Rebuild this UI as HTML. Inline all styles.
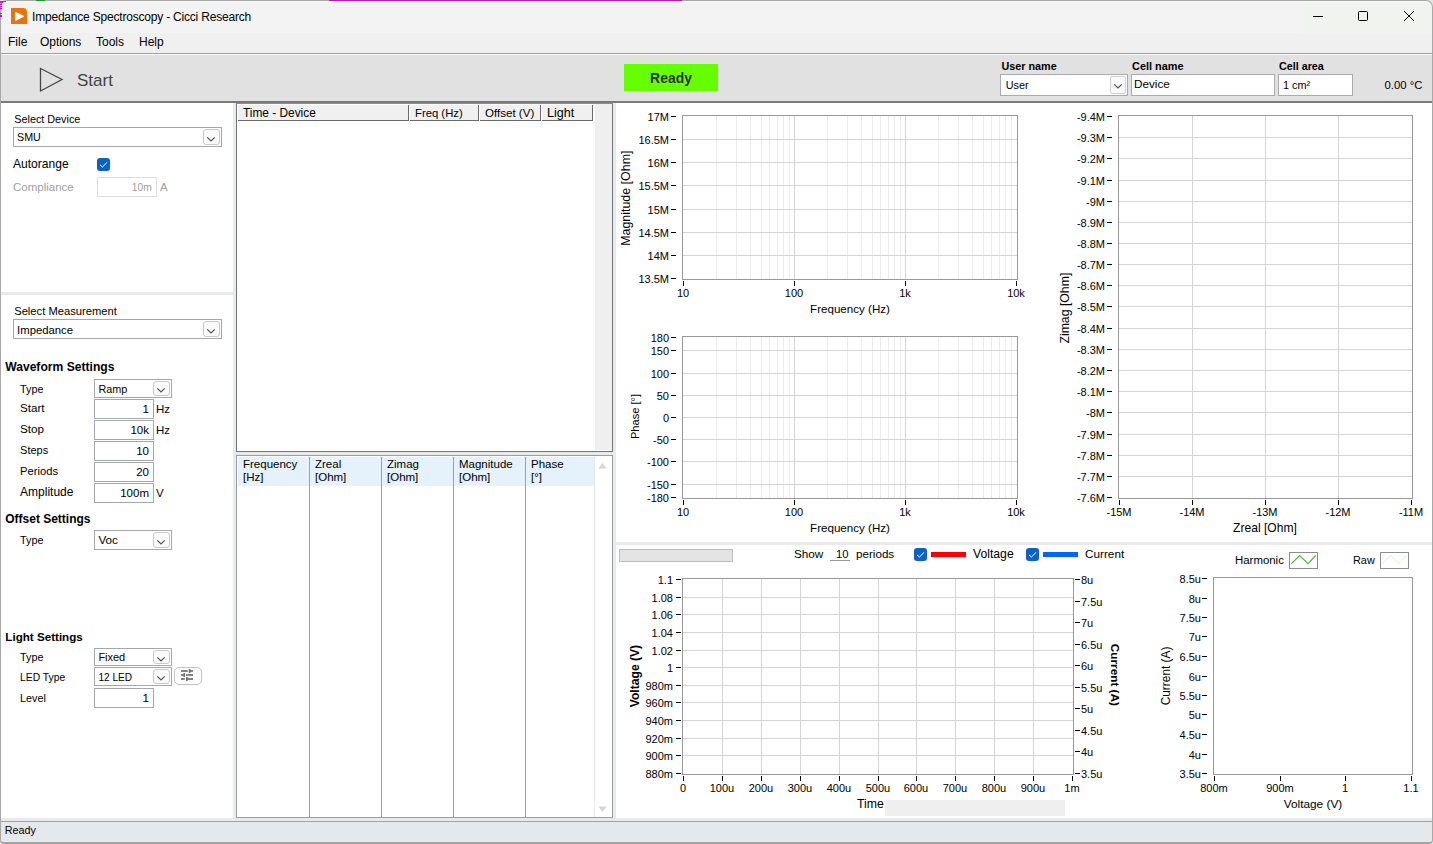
<!DOCTYPE html><html><head><meta charset="utf-8"><style>
html,body{margin:0;padding:0;width:1433px;height:844px;overflow:hidden;background:#fff;}
body{position:relative;font-family:"Liberation Sans", sans-serif;font-size:12px;color:#000;}
.t{position:absolute;white-space:nowrap;line-height:14px;}
.r{position:absolute;white-space:nowrap;line-height:14px;text-align:right;}
.c{position:absolute;white-space:nowrap;line-height:14px;text-align:center;}
</style></head><body>
<div style="position:absolute;left:0px;top:0px;width:1433px;height:33px;background:#f3f3f3;"></div>
<div style="position:absolute;left:1303px;top:0px;width:130px;height:33px;background:#f1f3ee;"></div>
<div style="position:absolute;left:329px;top:0px;width:353px;height:1px;background:#b41ab6;"></div>
<div style="position:absolute;left:0px;top:1px;width:1433px;height:1px;background:#f7faf7;"></div>
<div style="position:absolute;left:0px;top:33px;width:1433px;height:20px;background:#f0f0f0;"></div>
<div style="position:absolute;left:0px;top:53px;width:1433px;height:1px;background:#9f9f9f;"></div>
<div style="position:absolute;left:0px;top:54px;width:1433px;height:1px;background:#fcfcfc;"></div>
<div style="position:absolute;left:11px;top:8px;width:16px;height:16px;background:#e6740a;border-radius:0 4px 0 0;"></div>
<svg style="position:absolute;left:11px;top:8px" width="16" height="16"><path d="M4.6 4.6 L12.4 8.2 L4.6 12.2 Z" fill="#fff" stroke="#fff" stroke-width="1.2" stroke-linejoin="round"/></svg>
<div style="position:absolute;left:32px;top:11.00px;font-size:12px;line-height:12px;white-space:nowrap;letter-spacing:-0.2px;">Impedance Spectroscopy - Cicci Research</div>
<svg style="position:absolute;left:1300px;top:5px" width="130" height="24"><line x1="13" y1="11.5" x2="23" y2="11.5" stroke="#000" stroke-width="1"/><rect x="58.5" y="6.5" width="9" height="9" rx="1" fill="none" stroke="#000" stroke-width="1"/><line x1="104" y1="6" x2="114" y2="16" stroke="#000" stroke-width="1"/><line x1="114" y1="6" x2="104" y2="16" stroke="#000" stroke-width="1"/></svg>
<div class="t" style="left:8px;top:35px;font-size:12px;">File</div>
<div class="t" style="left:40px;top:35px;font-size:12px;">Options</div>
<div class="t" style="left:96px;top:35px;font-size:12px;">Tools</div>
<div class="t" style="left:139px;top:35px;font-size:12px;">Help</div>
<div style="position:absolute;left:0px;top:55px;width:1433px;height:46px;background:#e1e1e1;"></div>
<div style="position:absolute;left:0px;top:101px;width:1433px;height:2px;background:#7a7a7a;"></div>
<svg style="position:absolute;left:38px;top:65.5px" width="30" height="28"><path d="M2.5 2.5 L24 13.5 L2.5 25 Z" fill="none" stroke="#474747" stroke-width="1.3"/></svg>
<div class="t" style="left:77px;top:71px;font-size:17px;line-height:20px;color:#444;">Start</div>
<div style="position:absolute;left:624px;top:64px;width:94px;height:27px;background:#66ff00;"></div>
<div style="position:absolute;left:571px;width:200px;top:72.00px;font-size:13.93px;line-height:13.93px;white-space:nowrap;text-align:center;font-weight:bold;color:#33303a;">Ready</div>
<div style="position:absolute;left:1001.5px;top:61.00px;font-size:10.81px;line-height:10.81px;white-space:nowrap;font-weight:bold;">User name</div>
<div style="position:absolute;left:1132px;top:61.00px;font-size:10.92px;line-height:10.92px;white-space:nowrap;font-weight:bold;">Cell name</div>
<div style="position:absolute;left:1279px;top:61.00px;font-size:10.74px;line-height:10.74px;white-space:nowrap;font-weight:bold;">Cell area</div>
<div style="position:absolute;left:1000px;top:74px;width:128px;height:22px;background:#fff;border:1px solid #a9abae;box-sizing:border-box;"></div>
<div style="position:absolute;left:1110px;top:76px;width:16px;height:18px;background:#fafafa;border:1px solid #d0d0d0;box-sizing:border-box;border-radius:2px;"></div>
<svg style="position:absolute;left:1113px;top:82px" width="10" height="8"><path d="M1.3 2.3 L5 6 L8.7 2.3" fill="none" stroke="#505050" stroke-width="1.2"/></svg>
<div style="position:absolute;left:1005.7px;top:80.00px;font-size:10.8px;line-height:10.8px;white-space:nowrap;">User</div>
<div style="position:absolute;left:1131px;top:74px;width:144px;height:22px;background:#fff;border:1px solid #a9abae;box-sizing:border-box;"></div>
<div style="position:absolute;left:1134px;top:78.00px;font-size:11.71px;line-height:11.71px;white-space:nowrap;">Device</div>
<div style="position:absolute;left:1278px;top:74px;width:75px;height:22px;background:#fff;border:1px solid #a9abae;box-sizing:border-box;"></div>
<div style="position:absolute;left:1283px;top:80.00px;font-size:10.88px;line-height:10.88px;white-space:nowrap;">1 cm²</div>
<div style="position:absolute;left:1384.5px;top:80.00px;font-size:11.3px;line-height:11.3px;white-space:nowrap;">0.00 °C</div>
<div style="position:absolute;left:0px;top:103px;width:1433px;height:718px;background:#e9eaeb;"></div>
<div style="position:absolute;left:1px;top:103px;width:232px;height:189px;background:#fff;"></div>
<div style="position:absolute;left:1px;top:295px;width:232px;height:523px;background:#fff;"></div>
<div style="position:absolute;left:236px;top:103px;width:377px;height:349px;background:#fff;border:1px solid #6f7680;border-top:none;box-sizing:border-box;"></div>
<div style="position:absolute;left:236px;top:103px;width:377px;height:1px;background:#8a8d92;"></div>
<div style="position:absolute;left:238px;top:105px;width:171px;height:16px;background:#f0f0f0;border-right:1px solid #6a6a6a;border-bottom:1px solid #6a6a6a;box-sizing:border-box;"></div>
<div style="position:absolute;left:243px;top:108.00px;font-size:11.89px;line-height:11.89px;white-space:nowrap;">Time - Device</div>
<div style="position:absolute;left:410px;top:105px;width:69px;height:16px;background:#f0f0f0;border-right:1px solid #6a6a6a;border-bottom:1px solid #6a6a6a;box-sizing:border-box;"></div>
<div style="position:absolute;left:415px;top:108.00px;font-size:11.3px;line-height:11.3px;white-space:nowrap;">Freq (Hz)</div>
<div style="position:absolute;left:480px;top:105px;width:61px;height:16px;background:#f0f0f0;border-right:1px solid #6a6a6a;border-bottom:1px solid #6a6a6a;box-sizing:border-box;"></div>
<div style="position:absolute;left:485px;top:108.00px;font-size:11.57px;line-height:11.57px;white-space:nowrap;">Offset (V)</div>
<div style="position:absolute;left:542px;top:105px;width:51px;height:16px;background:#f0f0f0;border-right:1px solid #6a6a6a;border-bottom:1px solid #6a6a6a;box-sizing:border-box;"></div>
<div style="position:absolute;left:547px;top:107.00px;font-size:12.5px;line-height:12.5px;white-space:nowrap;">Light</div>
<div style="position:absolute;left:595px;top:104px;width:17px;height:346px;background:#efefef;"></div>
<div style="position:absolute;left:236px;top:455px;width:377px;height:363px;background:#fff;border:1px solid #9a9ea4;box-sizing:border-box;"></div>
<div style="position:absolute;left:238px;top:457px;width:357px;height:29px;background:#e5f1fb;"></div>
<div style="position:absolute;left:309px;top:457px;width:1px;height:360px;background:#a0a0a0;"></div>
<div style="position:absolute;left:381px;top:457px;width:1px;height:360px;background:#a0a0a0;"></div>
<div style="position:absolute;left:453px;top:457px;width:1px;height:360px;background:#a0a0a0;"></div>
<div style="position:absolute;left:525px;top:457px;width:1px;height:360px;background:#a0a0a0;"></div>
<div style="position:absolute;left:594px;top:457px;width:1px;height:360px;background:#e6e6e6;"></div>
<div style="position:absolute;left:243px;top:459.00px;font-size:11.5px;line-height:11.5px;white-space:nowrap;">Frequency</div>
<div style="position:absolute;left:243px;top:472.00px;font-size:11.5px;line-height:11.5px;white-space:nowrap;">[Hz]</div>
<div style="position:absolute;left:315px;top:459.00px;font-size:11.5px;line-height:11.5px;white-space:nowrap;">Zreal</div>
<div style="position:absolute;left:315px;top:472.00px;font-size:11.5px;line-height:11.5px;white-space:nowrap;">[Ohm]</div>
<div style="position:absolute;left:387px;top:459.00px;font-size:11.5px;line-height:11.5px;white-space:nowrap;">Zimag</div>
<div style="position:absolute;left:387px;top:472.00px;font-size:11.5px;line-height:11.5px;white-space:nowrap;">[Ohm]</div>
<div style="position:absolute;left:459px;top:459.00px;font-size:11.5px;line-height:11.5px;white-space:nowrap;">Magnitude</div>
<div style="position:absolute;left:459px;top:472.00px;font-size:11.5px;line-height:11.5px;white-space:nowrap;">[Ohm]</div>
<div style="position:absolute;left:531px;top:459.00px;font-size:11.5px;line-height:11.5px;white-space:nowrap;">Phase</div>
<div style="position:absolute;left:531px;top:472.00px;font-size:11.5px;line-height:11.5px;white-space:nowrap;">[°]</div>
<svg style="position:absolute;left:598px;top:462px" width="9" height="7"><path d="M0.5 6.5 L4.5 1 L8.5 6.5 Z" fill="#d6d6d6"/></svg>
<svg style="position:absolute;left:598px;top:806px" width="9" height="7"><path d="M0.5 0.5 L4.5 6 L8.5 0.5 Z" fill="#d6d6d6"/></svg>
<div style="position:absolute;left:616px;top:103px;width:816px;height:439px;background:#fff;"></div>
<div style="position:absolute;left:616px;top:545px;width:816px;height:273px;background:#fff;"></div>
<div style="position:absolute;left:1px;top:821px;width:1431px;height:1px;background:#a3a3a3;"></div>
<div style="position:absolute;left:1px;top:822px;width:1431px;height:20px;background:#e6e9ec;"></div>
<div style="position:absolute;left:4.7px;top:825.00px;font-size:10.76px;line-height:10.76px;white-space:nowrap;">Ready</div>
<div style="position:absolute;left:14.3px;top:114.00px;font-size:10.81px;line-height:10.81px;white-space:nowrap;">Select Device</div>
<div style="position:absolute;left:13px;top:127px;width:209px;height:20px;background:#fff;border:1px solid #a4a7ac;box-sizing:border-box;"></div>
<div style="position:absolute;left:203px;top:129px;width:17px;height:16px;box-sizing:border-box;border:1px solid #c9c9c9;border-radius:3px;background:#fafafa;"></div>
<svg style="position:absolute;left:206px;top:135px" width="10" height="8"><path d="M1.3 2.3 L5 6 L8.7 2.3" fill="none" stroke="#505050" stroke-width="1.2"/></svg>
<div style="position:absolute;left:17px;top:132.00px;font-size:10.71px;line-height:10.71px;white-space:nowrap;">SMU</div>
<div style="position:absolute;left:13px;top:158.00px;font-size:12.05px;line-height:12.05px;white-space:nowrap;">Autorange</div>
<div style="position:absolute;left:97px;top:158px;width:13px;height:13px;background:#0a62c2;border-radius:3px;"></div>
<svg style="position:absolute;left:97px;top:158px" width="13" height="13"><path d="M3 6.8 L5.4 9 L10.2 4.3" fill="none" stroke="#fff" stroke-width="1"/></svg>
<div style="position:absolute;left:13px;top:182.00px;font-size:11.5px;line-height:11.5px;white-space:nowrap;color:#a0a0a0;">Compliance</div>
<div style="position:absolute;left:97px;top:177px;width:60px;height:20px;background:#fff;border:1px solid #dcdde0;box-sizing:border-box;"></div>
<div style="position:absolute;left:131.8px;top:183.00px;font-size:10.28px;line-height:10.28px;white-space:nowrap;color:#a0a0a0;">10m</div>
<div style="position:absolute;left:160px;top:182.00px;font-size:11.5px;line-height:11.5px;white-space:nowrap;color:#a0a0a0;">A</div>
<div style="position:absolute;left:14.2px;top:306.00px;font-size:11.2px;line-height:11.2px;white-space:nowrap;">Select Measurement</div>
<div style="position:absolute;left:13px;top:319px;width:209px;height:20px;background:#fff;border:1px solid #a4a7ac;box-sizing:border-box;"></div>
<div style="position:absolute;left:203px;top:321px;width:17px;height:16px;box-sizing:border-box;border:1px solid #c9c9c9;border-radius:3px;background:#fafafa;"></div>
<svg style="position:absolute;left:206px;top:327px" width="10" height="8"><path d="M1.3 2.3 L5 6 L8.7 2.3" fill="none" stroke="#505050" stroke-width="1.2"/></svg>
<div style="position:absolute;left:17.1px;top:325.00px;font-size:11.32px;line-height:11.32px;white-space:nowrap;">Impedance</div>
<div style="position:absolute;left:5.2px;top:361.00px;font-size:12.12px;line-height:12.12px;white-space:nowrap;font-weight:bold;">Waveform Settings</div>
<div style="position:absolute;left:20.1px;top:384.00px;font-size:10.79px;line-height:10.79px;white-space:nowrap;">Type</div>
<div style="position:absolute;left:94px;top:379px;width:78px;height:19px;background:#fff;border:1px solid #a4a7ac;box-sizing:border-box;"></div>
<div style="position:absolute;left:153px;top:381px;width:17px;height:15px;box-sizing:border-box;border:1px solid #c9c9c9;border-radius:3px;background:#fafafa;"></div>
<svg style="position:absolute;left:156px;top:386px" width="10" height="8"><path d="M1.3 2.3 L5 6 L8.7 2.3" fill="none" stroke="#505050" stroke-width="1.2"/></svg>
<div style="position:absolute;left:98.4px;top:384.00px;font-size:10.8px;line-height:10.8px;white-space:nowrap;">Ramp</div>
<div style="position:absolute;left:20.1px;top:402.00px;font-size:11.6px;line-height:11.6px;white-space:nowrap;">Start</div>
<div style="position:absolute;left:94px;top:399px;width:60px;height:20px;background:#fff;border:1px solid #a4a7ac;box-sizing:border-box;"></div>
<div style="position:absolute;right:1284px;top:404.00px;font-size:11.5px;line-height:11.5px;white-space:nowrap;text-align:right;color:#000;">1</div>
<div style="position:absolute;left:156px;top:404.00px;font-size:11.5px;line-height:11.5px;white-space:nowrap;">Hz</div>
<div style="position:absolute;left:20.1px;top:423.00px;font-size:11.67px;line-height:11.67px;white-space:nowrap;">Stop</div>
<div style="position:absolute;left:94px;top:420px;width:60px;height:20px;background:#fff;border:1px solid #a4a7ac;box-sizing:border-box;"></div>
<div style="position:absolute;right:1284px;top:425.00px;font-size:11.5px;line-height:11.5px;white-space:nowrap;text-align:right;color:#000;">10k</div>
<div style="position:absolute;left:156px;top:425.00px;font-size:11.5px;line-height:11.5px;white-space:nowrap;">Hz</div>
<div style="position:absolute;left:20.1px;top:445.00px;font-size:10.99px;line-height:10.99px;white-space:nowrap;">Steps</div>
<div style="position:absolute;left:94px;top:441px;width:60px;height:20px;background:#fff;border:1px solid #a4a7ac;box-sizing:border-box;"></div>
<div style="position:absolute;right:1284px;top:446.00px;font-size:11.5px;line-height:11.5px;white-space:nowrap;text-align:right;color:#000;">10</div>
<div style="position:absolute;left:20.1px;top:466.00px;font-size:11.21px;line-height:11.21px;white-space:nowrap;">Periods</div>
<div style="position:absolute;left:94px;top:462px;width:60px;height:20px;background:#fff;border:1px solid #a4a7ac;box-sizing:border-box;"></div>
<div style="position:absolute;right:1284px;top:467.00px;font-size:11.5px;line-height:11.5px;white-space:nowrap;text-align:right;color:#000;">20</div>
<div style="position:absolute;left:20.1px;top:486.00px;font-size:11.99px;line-height:11.99px;white-space:nowrap;">Amplitude</div>
<div style="position:absolute;left:94px;top:483px;width:60px;height:20px;background:#fff;border:1px solid #a4a7ac;box-sizing:border-box;"></div>
<div style="position:absolute;right:1284px;top:488.00px;font-size:11.5px;line-height:11.5px;white-space:nowrap;text-align:right;color:#000;">100m</div>
<div style="position:absolute;left:156px;top:488.00px;font-size:11.5px;line-height:11.5px;white-space:nowrap;">V</div>
<div style="position:absolute;left:5.3px;top:513.00px;font-size:11.98px;line-height:11.98px;white-space:nowrap;font-weight:bold;">Offset Settings</div>
<div style="position:absolute;left:20.1px;top:535.00px;font-size:10.79px;line-height:10.79px;white-space:nowrap;">Type</div>
<div style="position:absolute;left:94px;top:530px;width:78px;height:20px;background:#fff;border:1px solid #a4a7ac;box-sizing:border-box;"></div>
<div style="position:absolute;left:153px;top:532px;width:17px;height:16px;box-sizing:border-box;border:1px solid #c9c9c9;border-radius:3px;background:#fafafa;"></div>
<svg style="position:absolute;left:156px;top:538px" width="10" height="8"><path d="M1.3 2.3 L5 6 L8.7 2.3" fill="none" stroke="#505050" stroke-width="1.2"/></svg>
<div style="position:absolute;left:98.4px;top:534.00px;font-size:11.69px;line-height:11.69px;white-space:nowrap;">Voc</div>
<div style="position:absolute;left:5.3px;top:631.00px;font-size:11.63px;line-height:11.63px;white-space:nowrap;font-weight:bold;">Light Settings</div>
<div style="position:absolute;left:20.1px;top:652.00px;font-size:10.79px;line-height:10.79px;white-space:nowrap;">Type</div>
<div style="position:absolute;left:94px;top:648px;width:78px;height:18px;background:#fff;border:1px solid #a4a7ac;box-sizing:border-box;"></div>
<div style="position:absolute;left:153px;top:650px;width:17px;height:14px;box-sizing:border-box;border:1px solid #c9c9c9;border-radius:3px;background:#fafafa;"></div>
<svg style="position:absolute;left:156px;top:655px" width="10" height="8"><path d="M1.3 2.3 L5 6 L8.7 2.3" fill="none" stroke="#505050" stroke-width="1.2"/></svg>
<div style="position:absolute;left:98.4px;top:652.00px;font-size:10.96px;line-height:10.96px;white-space:nowrap;">Fixed</div>
<div style="position:absolute;left:20.1px;top:673.00px;font-size:10.34px;line-height:10.34px;white-space:nowrap;">LED Type</div>
<div style="position:absolute;left:94px;top:667px;width:78px;height:19px;background:#fff;border:1px solid #a4a7ac;box-sizing:border-box;"></div>
<div style="position:absolute;left:153px;top:669px;width:17px;height:15px;box-sizing:border-box;border:1px solid #c9c9c9;border-radius:3px;background:#fafafa;"></div>
<svg style="position:absolute;left:156px;top:674px" width="10" height="8"><path d="M1.3 2.3 L5 6 L8.7 2.3" fill="none" stroke="#505050" stroke-width="1.2"/></svg>
<div style="position:absolute;left:98.4px;top:673.00px;font-size:10.1px;line-height:10.1px;white-space:nowrap;">12 LED</div>
<div style="position:absolute;left:174px;top:667px;width:28px;height:18px;box-sizing:border-box;border:1px solid #c4c4c4;border-radius:5px;background:#fcfcfc;"></div>
<svg style="position:absolute;left:170px;top:662px" width="40" height="28"><g stroke="#6e6e6e" stroke-width="1.7"><line x1="181" y1="9" x2="187.8" y2="9" transform="translate(-170,0)"/><line x1="189" y1="9" x2="193" y2="9" transform="translate(-170,0)"/><line x1="181" y1="13" x2="184.5" y2="13" transform="translate(-170,0)"/><line x1="186" y1="13" x2="193" y2="13" transform="translate(-170,0)"/><line x1="181" y1="17" x2="184.8" y2="17" transform="translate(-170,0)"/><line x1="186.5" y1="17" x2="193" y2="17" transform="translate(-170,0)"/></g><g stroke="#6e6e6e" stroke-width="1.6"><line x1="19.6" y1="7" x2="19.6" y2="11"/><line x1="14.3" y1="11" x2="14.3" y2="15"/><line x1="16.8" y1="15" x2="16.8" y2="19"/></g></svg>
<div style="position:absolute;left:20.1px;top:693.00px;font-size:10.75px;line-height:10.75px;white-space:nowrap;">Level</div>
<div style="position:absolute;left:94px;top:688px;width:60px;height:20px;background:#fff;border:1px solid #a4a7ac;box-sizing:border-box;"></div>
<div style="position:absolute;right:1284px;top:693.00px;font-size:11.5px;line-height:11.5px;white-space:nowrap;text-align:right;color:#000;">1</div>
<div style="position:absolute;right:764px;top:112.00px;font-size:11px;line-height:11px;white-space:nowrap;text-align:right;">17M</div>
<div style="position:absolute;right:764px;top:135.00px;font-size:11px;line-height:11px;white-space:nowrap;text-align:right;">16.5M</div>
<div style="position:absolute;right:764px;top:158.00px;font-size:11px;line-height:11px;white-space:nowrap;text-align:right;">16M</div>
<div style="position:absolute;right:764px;top:181.00px;font-size:11px;line-height:11px;white-space:nowrap;text-align:right;">15.5M</div>
<div style="position:absolute;right:764px;top:205.00px;font-size:11px;line-height:11px;white-space:nowrap;text-align:right;">15M</div>
<div style="position:absolute;right:764px;top:228.00px;font-size:11px;line-height:11px;white-space:nowrap;text-align:right;">14.5M</div>
<div style="position:absolute;right:764px;top:251.00px;font-size:11px;line-height:11px;white-space:nowrap;text-align:right;">14M</div>
<div style="position:absolute;right:764px;top:274.00px;font-size:11px;line-height:11px;white-space:nowrap;text-align:right;">13.5M</div>
<div style="position:absolute;left:583px;width:200px;top:288.00px;font-size:11px;line-height:11px;white-space:nowrap;text-align:center;">10</div>
<div style="position:absolute;left:694px;width:200px;top:288.00px;font-size:11px;line-height:11px;white-space:nowrap;text-align:center;">100</div>
<div style="position:absolute;left:805px;width:200px;top:288.00px;font-size:11px;line-height:11px;white-space:nowrap;text-align:center;">1k</div>
<div style="position:absolute;left:916px;width:200px;top:288.00px;font-size:11px;line-height:11px;white-space:nowrap;text-align:center;">10k</div>
<div style="position:absolute;left:750px;width:200px;top:304.00px;font-size:11.58px;line-height:11.58px;white-space:nowrap;text-align:center;">Frequency (Hz)</div>
<div style="position:absolute;left:475.95px;top:192.09px;width:300px;height:12.43px;line-height:12.43px;font-size:12.43px;text-align:center;white-space:nowrap;transform:rotate(-90deg);">Magnitude [Ohm]</div>
<div style="position:absolute;right:764px;top:333.00px;font-size:11px;line-height:11px;white-space:nowrap;text-align:right;">180</div>
<div style="position:absolute;right:764px;top:346.00px;font-size:11px;line-height:11px;white-space:nowrap;text-align:right;">150</div>
<div style="position:absolute;right:764px;top:369.00px;font-size:11px;line-height:11px;white-space:nowrap;text-align:right;">100</div>
<div style="position:absolute;right:764px;top:391.00px;font-size:11px;line-height:11px;white-space:nowrap;text-align:right;">50</div>
<div style="position:absolute;right:764px;top:413.00px;font-size:11px;line-height:11px;white-space:nowrap;text-align:right;">0</div>
<div style="position:absolute;right:764px;top:435.00px;font-size:11px;line-height:11px;white-space:nowrap;text-align:right;">-50</div>
<div style="position:absolute;right:764px;top:457.00px;font-size:11px;line-height:11px;white-space:nowrap;text-align:right;">-100</div>
<div style="position:absolute;right:764px;top:480.00px;font-size:11px;line-height:11px;white-space:nowrap;text-align:right;">-150</div>
<div style="position:absolute;right:764px;top:493.00px;font-size:11px;line-height:11px;white-space:nowrap;text-align:right;">-180</div>
<div style="position:absolute;left:583px;width:200px;top:507.00px;font-size:11px;line-height:11px;white-space:nowrap;text-align:center;">10</div>
<div style="position:absolute;left:694px;width:200px;top:507.00px;font-size:11px;line-height:11px;white-space:nowrap;text-align:center;">100</div>
<div style="position:absolute;left:805px;width:200px;top:507.00px;font-size:11px;line-height:11px;white-space:nowrap;text-align:center;">1k</div>
<div style="position:absolute;left:916px;width:200px;top:507.00px;font-size:11px;line-height:11px;white-space:nowrap;text-align:center;">10k</div>
<div style="position:absolute;left:750px;width:200px;top:523.00px;font-size:11.58px;line-height:11.58px;white-space:nowrap;text-align:center;">Frequency (Hz)</div>
<div style="position:absolute;left:485.50px;top:411.41px;width:300px;height:11.08px;line-height:11.08px;font-size:11.08px;text-align:center;white-space:nowrap;transform:rotate(-90deg);">Phase [°]</div>
<div style="position:absolute;right:328px;top:112.00px;font-size:11px;line-height:11px;white-space:nowrap;text-align:right;">-9.4M</div>
<div style="position:absolute;right:328px;top:133.00px;font-size:11px;line-height:11px;white-space:nowrap;text-align:right;">-9.3M</div>
<div style="position:absolute;right:328px;top:154.00px;font-size:11px;line-height:11px;white-space:nowrap;text-align:right;">-9.2M</div>
<div style="position:absolute;right:328px;top:176.00px;font-size:11px;line-height:11px;white-space:nowrap;text-align:right;">-9.1M</div>
<div style="position:absolute;right:328px;top:197.00px;font-size:11px;line-height:11px;white-space:nowrap;text-align:right;">-9M</div>
<div style="position:absolute;right:328px;top:218.00px;font-size:11px;line-height:11px;white-space:nowrap;text-align:right;">-8.9M</div>
<div style="position:absolute;right:328px;top:239.00px;font-size:11px;line-height:11px;white-space:nowrap;text-align:right;">-8.8M</div>
<div style="position:absolute;right:328px;top:260.00px;font-size:11px;line-height:11px;white-space:nowrap;text-align:right;">-8.7M</div>
<div style="position:absolute;right:328px;top:281.00px;font-size:11px;line-height:11px;white-space:nowrap;text-align:right;">-8.6M</div>
<div style="position:absolute;right:328px;top:302.00px;font-size:11px;line-height:11px;white-space:nowrap;text-align:right;">-8.5M</div>
<div style="position:absolute;right:328px;top:324.00px;font-size:11px;line-height:11px;white-space:nowrap;text-align:right;">-8.4M</div>
<div style="position:absolute;right:328px;top:345.00px;font-size:11px;line-height:11px;white-space:nowrap;text-align:right;">-8.3M</div>
<div style="position:absolute;right:328px;top:366.00px;font-size:11px;line-height:11px;white-space:nowrap;text-align:right;">-8.2M</div>
<div style="position:absolute;right:328px;top:387.00px;font-size:11px;line-height:11px;white-space:nowrap;text-align:right;">-8.1M</div>
<div style="position:absolute;right:328px;top:408.00px;font-size:11px;line-height:11px;white-space:nowrap;text-align:right;">-8M</div>
<div style="position:absolute;right:328px;top:430.00px;font-size:11px;line-height:11px;white-space:nowrap;text-align:right;">-7.9M</div>
<div style="position:absolute;right:328px;top:451.00px;font-size:11px;line-height:11px;white-space:nowrap;text-align:right;">-7.8M</div>
<div style="position:absolute;right:328px;top:472.00px;font-size:11px;line-height:11px;white-space:nowrap;text-align:right;">-7.7M</div>
<div style="position:absolute;right:328px;top:493.00px;font-size:11px;line-height:11px;white-space:nowrap;text-align:right;">-7.6M</div>
<div style="position:absolute;left:1019px;width:200px;top:507.00px;font-size:11px;line-height:11px;white-space:nowrap;text-align:center;">-15M</div>
<div style="position:absolute;left:1092px;width:200px;top:507.00px;font-size:11px;line-height:11px;white-space:nowrap;text-align:center;">-14M</div>
<div style="position:absolute;left:1165px;width:200px;top:507.00px;font-size:11px;line-height:11px;white-space:nowrap;text-align:center;">-13M</div>
<div style="position:absolute;left:1238px;width:200px;top:507.00px;font-size:11px;line-height:11px;white-space:nowrap;text-align:center;">-12M</div>
<div style="position:absolute;left:1311px;width:200px;top:507.00px;font-size:11px;line-height:11px;white-space:nowrap;text-align:center;">-11M</div>
<div style="position:absolute;left:1165px;width:200px;top:522.00px;font-size:12.09px;line-height:12.09px;white-space:nowrap;text-align:center;">Zreal [Ohm]</div>
<div style="position:absolute;left:914.50px;top:302.36px;width:300px;height:12.28px;line-height:12.28px;font-size:12.28px;text-align:center;white-space:nowrap;transform:rotate(-90deg);">Zimag [Ohm]</div>
<div style="position:absolute;right:760px;top:575.00px;font-size:11px;line-height:11px;white-space:nowrap;text-align:right;">1.1</div>
<div style="position:absolute;right:760px;top:593.00px;font-size:11px;line-height:11px;white-space:nowrap;text-align:right;">1.08</div>
<div style="position:absolute;right:760px;top:610.00px;font-size:11px;line-height:11px;white-space:nowrap;text-align:right;">1.06</div>
<div style="position:absolute;right:760px;top:628.00px;font-size:11px;line-height:11px;white-space:nowrap;text-align:right;">1.04</div>
<div style="position:absolute;right:760px;top:646.00px;font-size:11px;line-height:11px;white-space:nowrap;text-align:right;">1.02</div>
<div style="position:absolute;right:760px;top:663.00px;font-size:11px;line-height:11px;white-space:nowrap;text-align:right;">1</div>
<div style="position:absolute;right:760px;top:681.00px;font-size:11px;line-height:11px;white-space:nowrap;text-align:right;">980m</div>
<div style="position:absolute;right:760px;top:698.00px;font-size:11px;line-height:11px;white-space:nowrap;text-align:right;">960m</div>
<div style="position:absolute;right:760px;top:716.00px;font-size:11px;line-height:11px;white-space:nowrap;text-align:right;">940m</div>
<div style="position:absolute;right:760px;top:734.00px;font-size:11px;line-height:11px;white-space:nowrap;text-align:right;">920m</div>
<div style="position:absolute;right:760px;top:751.00px;font-size:11px;line-height:11px;white-space:nowrap;text-align:right;">900m</div>
<div style="position:absolute;right:760px;top:769.00px;font-size:11px;line-height:11px;white-space:nowrap;text-align:right;">880m</div>
<div style="position:absolute;left:1081px;top:575.00px;font-size:11px;line-height:11px;white-space:nowrap;">8u</div>
<div style="position:absolute;left:1081px;top:597.00px;font-size:11px;line-height:11px;white-space:nowrap;">7.5u</div>
<div style="position:absolute;left:1081px;top:618.00px;font-size:11px;line-height:11px;white-space:nowrap;">7u</div>
<div style="position:absolute;left:1081px;top:640.00px;font-size:11px;line-height:11px;white-space:nowrap;">6.5u</div>
<div style="position:absolute;left:1081px;top:661.00px;font-size:11px;line-height:11px;white-space:nowrap;">6u</div>
<div style="position:absolute;left:1081px;top:683.00px;font-size:11px;line-height:11px;white-space:nowrap;">5.5u</div>
<div style="position:absolute;left:1081px;top:704.00px;font-size:11px;line-height:11px;white-space:nowrap;">5u</div>
<div style="position:absolute;left:1081px;top:726.00px;font-size:11px;line-height:11px;white-space:nowrap;">4.5u</div>
<div style="position:absolute;left:1081px;top:747.00px;font-size:11px;line-height:11px;white-space:nowrap;">4u</div>
<div style="position:absolute;left:1081px;top:769.00px;font-size:11px;line-height:11px;white-space:nowrap;">3.5u</div>
<div style="position:absolute;left:583px;width:200px;top:783.00px;font-size:11px;line-height:11px;white-space:nowrap;text-align:center;">0</div>
<div style="position:absolute;left:622px;width:200px;top:783.00px;font-size:11px;line-height:11px;white-space:nowrap;text-align:center;">100u</div>
<div style="position:absolute;left:661px;width:200px;top:783.00px;font-size:11px;line-height:11px;white-space:nowrap;text-align:center;">200u</div>
<div style="position:absolute;left:700px;width:200px;top:783.00px;font-size:11px;line-height:11px;white-space:nowrap;text-align:center;">300u</div>
<div style="position:absolute;left:739px;width:200px;top:783.00px;font-size:11px;line-height:11px;white-space:nowrap;text-align:center;">400u</div>
<div style="position:absolute;left:778px;width:200px;top:783.00px;font-size:11px;line-height:11px;white-space:nowrap;text-align:center;">500u</div>
<div style="position:absolute;left:816px;width:200px;top:783.00px;font-size:11px;line-height:11px;white-space:nowrap;text-align:center;">600u</div>
<div style="position:absolute;left:855px;width:200px;top:783.00px;font-size:11px;line-height:11px;white-space:nowrap;text-align:center;">700u</div>
<div style="position:absolute;left:894px;width:200px;top:783.00px;font-size:11px;line-height:11px;white-space:nowrap;text-align:center;">800u</div>
<div style="position:absolute;left:933px;width:200px;top:783.00px;font-size:11px;line-height:11px;white-space:nowrap;text-align:center;">900u</div>
<div style="position:absolute;left:972px;width:200px;top:783.00px;font-size:11px;line-height:11px;white-space:nowrap;text-align:center;">1m</div>
<div style="position:absolute;left:857px;top:798.00px;font-size:12.27px;line-height:12.27px;white-space:nowrap;">Time</div>
<div style="position:absolute;left:885px;top:800px;width:180px;height:16px;background:#efefef;"></div>
<div style="position:absolute;left:484.90px;top:670.34px;width:300px;height:12.12px;line-height:12.12px;font-size:12.12px;text-align:center;white-space:nowrap;transform:rotate(-90deg);font-weight:bold;">Voltage (V)</div>
<div style="position:absolute;left:964.50px;top:669.01px;width:300px;height:11.77px;line-height:11.77px;font-size:11.77px;text-align:center;white-space:nowrap;transform:rotate(90deg);font-weight:bold;">Current (A)</div>
<div style="position:absolute;left:619px;top:549px;width:114px;height:13px;background:#e4e4e4;border:1px solid #bdbdbd;box-sizing:border-box;"></div>
<div style="position:absolute;left:794px;top:548.00px;font-size:11.71px;line-height:11.71px;white-space:nowrap;">Show</div>
<div style="position:absolute;left:836px;top:549.00px;font-size:11.24px;line-height:11.24px;white-space:nowrap;">10</div>
<div style="position:absolute;left:856px;top:548.00px;font-size:11.65px;line-height:11.65px;white-space:nowrap;">periods</div>
<div style="position:absolute;left:914px;top:548px;width:13px;height:13px;background:#0a62c2;border-radius:3px;"></div>
<svg style="position:absolute;left:914px;top:548px" width="13" height="13"><path d="M3 6.8 L5.4 9 L10.2 4.3" fill="none" stroke="#fff" stroke-width="1"/></svg>
<div style="position:absolute;left:931px;top:552px;width:35px;height:5px;background:#ff0000;"></div>
<div style="position:absolute;left:973px;top:548.00px;font-size:12.2px;line-height:12.2px;white-space:nowrap;">Voltage</div>
<div style="position:absolute;left:1026px;top:548px;width:13px;height:13px;background:#0a62c2;border-radius:3px;"></div>
<svg style="position:absolute;left:1026px;top:548px" width="13" height="13"><path d="M3 6.8 L5.4 9 L10.2 4.3" fill="none" stroke="#fff" stroke-width="1"/></svg>
<div style="position:absolute;left:1043px;top:552px;width:35px;height:5px;background:#0064ff;"></div>
<div style="position:absolute;left:1085px;top:548.00px;font-size:11.76px;line-height:11.76px;white-space:nowrap;">Current</div>
<div style="position:absolute;right:232px;top:574.00px;font-size:11px;line-height:11px;white-space:nowrap;text-align:right;">8.5u</div>
<div style="position:absolute;right:232px;top:594.00px;font-size:11px;line-height:11px;white-space:nowrap;text-align:right;">8u</div>
<div style="position:absolute;right:232px;top:613.00px;font-size:11px;line-height:11px;white-space:nowrap;text-align:right;">7.5u</div>
<div style="position:absolute;right:232px;top:632.00px;font-size:11px;line-height:11px;white-space:nowrap;text-align:right;">7u</div>
<div style="position:absolute;right:232px;top:652.00px;font-size:11px;line-height:11px;white-space:nowrap;text-align:right;">6.5u</div>
<div style="position:absolute;right:232px;top:672.00px;font-size:11px;line-height:11px;white-space:nowrap;text-align:right;">6u</div>
<div style="position:absolute;right:232px;top:691.00px;font-size:11px;line-height:11px;white-space:nowrap;text-align:right;">5.5u</div>
<div style="position:absolute;right:232px;top:710.00px;font-size:11px;line-height:11px;white-space:nowrap;text-align:right;">5u</div>
<div style="position:absolute;right:232px;top:730.00px;font-size:11px;line-height:11px;white-space:nowrap;text-align:right;">4.5u</div>
<div style="position:absolute;right:232px;top:750.00px;font-size:11px;line-height:11px;white-space:nowrap;text-align:right;">4u</div>
<div style="position:absolute;right:232px;top:769.00px;font-size:11px;line-height:11px;white-space:nowrap;text-align:right;">3.5u</div>
<div style="position:absolute;left:1114px;width:200px;top:783.00px;font-size:11px;line-height:11px;white-space:nowrap;text-align:center;">800m</div>
<div style="position:absolute;left:1180px;width:200px;top:783.00px;font-size:11px;line-height:11px;white-space:nowrap;text-align:center;">900m</div>
<div style="position:absolute;left:1245px;width:200px;top:783.00px;font-size:11px;line-height:11px;white-space:nowrap;text-align:center;">1</div>
<div style="position:absolute;left:1311px;width:200px;top:783.00px;font-size:11px;line-height:11px;white-space:nowrap;text-align:center;">1.1</div>
<div style="position:absolute;left:1213px;width:200px;top:799.00px;font-size:11.84px;line-height:11.84px;white-space:nowrap;text-align:center;">Voltage (V)</div>
<div style="position:absolute;left:1016.90px;top:670.40px;width:300px;height:11.9px;line-height:11.9px;font-size:11.9px;text-align:center;white-space:nowrap;transform:rotate(-90deg);">Current (A)</div>
<div style="position:absolute;left:1235px;top:555.00px;font-size:11.43px;line-height:11.43px;white-space:nowrap;">Harmonic</div>
<div style="position:absolute;left:1289px;top:552px;width:29px;height:17px;border:1px solid #8c8c8c;box-sizing:border-box;background:#fff;"></div>
<svg style="position:absolute;left:1289px;top:552px" width="29" height="17"><path d="M2.3 11.6 L10.7 3.5 L19 11.6 L26.7 3.5" fill="none" stroke="#4cb63c" stroke-width="1.2"/></svg>
<div style="position:absolute;left:1353px;top:555.00px;font-size:10.9px;line-height:10.9px;white-space:nowrap;">Raw</div>
<div style="position:absolute;left:1380px;top:552px;width:29px;height:17px;border:1px solid #8c8c8c;box-sizing:border-box;background:#fff;"></div>
<svg style="position:absolute;left:1380px;top:552px" width="29" height="17"><path d="M2.3 11.6 L10.7 3.5 L19 11.6 L26.7 3.5" fill="none" stroke="#e6f7e3" stroke-width="1.2"/></svg>
<svg style="position:absolute;left:0;top:0" width="1433" height="844" shape-rendering="crispEdges"><line x1="716.5" y1="116" x2="716.5" y2="279" stroke="#ececec" stroke-width="1"/><line x1="736.5" y1="116" x2="736.5" y2="279" stroke="#ececec" stroke-width="1"/><line x1="750.5" y1="116" x2="750.5" y2="279" stroke="#ececec" stroke-width="1"/><line x1="761.5" y1="116" x2="761.5" y2="279" stroke="#ececec" stroke-width="1"/><line x1="769.5" y1="116" x2="769.5" y2="279" stroke="#ececec" stroke-width="1"/><line x1="777.5" y1="116" x2="777.5" y2="279" stroke="#ececec" stroke-width="1"/><line x1="783.5" y1="116" x2="783.5" y2="279" stroke="#ececec" stroke-width="1"/><line x1="789.5" y1="116" x2="789.5" y2="279" stroke="#ececec" stroke-width="1"/><line x1="827.5" y1="116" x2="827.5" y2="279" stroke="#ececec" stroke-width="1"/><line x1="847.5" y1="116" x2="847.5" y2="279" stroke="#ececec" stroke-width="1"/><line x1="861.5" y1="116" x2="861.5" y2="279" stroke="#ececec" stroke-width="1"/><line x1="872.5" y1="116" x2="872.5" y2="279" stroke="#ececec" stroke-width="1"/><line x1="880.5" y1="116" x2="880.5" y2="279" stroke="#ececec" stroke-width="1"/><line x1="888.5" y1="116" x2="888.5" y2="279" stroke="#ececec" stroke-width="1"/><line x1="894.5" y1="116" x2="894.5" y2="279" stroke="#ececec" stroke-width="1"/><line x1="900.5" y1="116" x2="900.5" y2="279" stroke="#ececec" stroke-width="1"/><line x1="938.5" y1="116" x2="938.5" y2="279" stroke="#ececec" stroke-width="1"/><line x1="958.5" y1="116" x2="958.5" y2="279" stroke="#ececec" stroke-width="1"/><line x1="972.5" y1="116" x2="972.5" y2="279" stroke="#ececec" stroke-width="1"/><line x1="983.5" y1="116" x2="983.5" y2="279" stroke="#ececec" stroke-width="1"/><line x1="991.5" y1="116" x2="991.5" y2="279" stroke="#ececec" stroke-width="1"/><line x1="999.5" y1="116" x2="999.5" y2="279" stroke="#ececec" stroke-width="1"/><line x1="1005.5" y1="116" x2="1005.5" y2="279" stroke="#ececec" stroke-width="1"/><line x1="1011.5" y1="116" x2="1011.5" y2="279" stroke="#ececec" stroke-width="1"/><line x1="794.5" y1="116" x2="794.5" y2="279" stroke="#d4d4d4" stroke-width="1"/><line x1="905.5" y1="116" x2="905.5" y2="279" stroke="#d4d4d4" stroke-width="1"/><line x1="671" y1="116.5" x2="676" y2="116.5" stroke="#000" stroke-width="1"/><line x1="683" y1="139.5" x2="1017" y2="139.5" stroke="#d4d4d4" stroke-width="1"/><line x1="671" y1="139.5" x2="676" y2="139.5" stroke="#000" stroke-width="1"/><line x1="683" y1="162.5" x2="1017" y2="162.5" stroke="#d4d4d4" stroke-width="1"/><line x1="671" y1="162.5" x2="676" y2="162.5" stroke="#000" stroke-width="1"/><line x1="683" y1="185.5" x2="1017" y2="185.5" stroke="#d4d4d4" stroke-width="1"/><line x1="671" y1="185.5" x2="676" y2="185.5" stroke="#000" stroke-width="1"/><line x1="683" y1="209.5" x2="1017" y2="209.5" stroke="#d4d4d4" stroke-width="1"/><line x1="671" y1="209.5" x2="676" y2="209.5" stroke="#000" stroke-width="1"/><line x1="683" y1="232.5" x2="1017" y2="232.5" stroke="#d4d4d4" stroke-width="1"/><line x1="671" y1="232.5" x2="676" y2="232.5" stroke="#000" stroke-width="1"/><line x1="683" y1="255.5" x2="1017" y2="255.5" stroke="#d4d4d4" stroke-width="1"/><line x1="671" y1="255.5" x2="676" y2="255.5" stroke="#000" stroke-width="1"/><line x1="671" y1="278.5" x2="676" y2="278.5" stroke="#000" stroke-width="1"/><line x1="682" y1="115.5" x2="1018" y2="115.5" stroke="#999999" stroke-width="1"/><line x1="682" y1="279.5" x2="1018" y2="279.5" stroke="#999999" stroke-width="1"/><line x1="682.5" y1="115" x2="682.5" y2="280" stroke="#999999" stroke-width="1"/><line x1="1017.5" y1="115" x2="1017.5" y2="280" stroke="#999999" stroke-width="1"/><line x1="683.5" y1="281" x2="683.5" y2="286" stroke="#000" stroke-width="1"/><line x1="794.5" y1="281" x2="794.5" y2="286" stroke="#000" stroke-width="1"/><line x1="905.5" y1="281" x2="905.5" y2="286" stroke="#000" stroke-width="1"/><line x1="1016.5" y1="281" x2="1016.5" y2="286" stroke="#000" stroke-width="1"/><line x1="716.5" y1="337" x2="716.5" y2="498" stroke="#ececec" stroke-width="1"/><line x1="736.5" y1="337" x2="736.5" y2="498" stroke="#ececec" stroke-width="1"/><line x1="750.5" y1="337" x2="750.5" y2="498" stroke="#ececec" stroke-width="1"/><line x1="761.5" y1="337" x2="761.5" y2="498" stroke="#ececec" stroke-width="1"/><line x1="769.5" y1="337" x2="769.5" y2="498" stroke="#ececec" stroke-width="1"/><line x1="777.5" y1="337" x2="777.5" y2="498" stroke="#ececec" stroke-width="1"/><line x1="783.5" y1="337" x2="783.5" y2="498" stroke="#ececec" stroke-width="1"/><line x1="789.5" y1="337" x2="789.5" y2="498" stroke="#ececec" stroke-width="1"/><line x1="827.5" y1="337" x2="827.5" y2="498" stroke="#ececec" stroke-width="1"/><line x1="847.5" y1="337" x2="847.5" y2="498" stroke="#ececec" stroke-width="1"/><line x1="861.5" y1="337" x2="861.5" y2="498" stroke="#ececec" stroke-width="1"/><line x1="872.5" y1="337" x2="872.5" y2="498" stroke="#ececec" stroke-width="1"/><line x1="880.5" y1="337" x2="880.5" y2="498" stroke="#ececec" stroke-width="1"/><line x1="888.5" y1="337" x2="888.5" y2="498" stroke="#ececec" stroke-width="1"/><line x1="894.5" y1="337" x2="894.5" y2="498" stroke="#ececec" stroke-width="1"/><line x1="900.5" y1="337" x2="900.5" y2="498" stroke="#ececec" stroke-width="1"/><line x1="938.5" y1="337" x2="938.5" y2="498" stroke="#ececec" stroke-width="1"/><line x1="958.5" y1="337" x2="958.5" y2="498" stroke="#ececec" stroke-width="1"/><line x1="972.5" y1="337" x2="972.5" y2="498" stroke="#ececec" stroke-width="1"/><line x1="983.5" y1="337" x2="983.5" y2="498" stroke="#ececec" stroke-width="1"/><line x1="991.5" y1="337" x2="991.5" y2="498" stroke="#ececec" stroke-width="1"/><line x1="999.5" y1="337" x2="999.5" y2="498" stroke="#ececec" stroke-width="1"/><line x1="1005.5" y1="337" x2="1005.5" y2="498" stroke="#ececec" stroke-width="1"/><line x1="1011.5" y1="337" x2="1011.5" y2="498" stroke="#ececec" stroke-width="1"/><line x1="794.5" y1="337" x2="794.5" y2="498" stroke="#d4d4d4" stroke-width="1"/><line x1="905.5" y1="337" x2="905.5" y2="498" stroke="#d4d4d4" stroke-width="1"/><line x1="671" y1="337.5" x2="676" y2="337.5" stroke="#000" stroke-width="1"/><line x1="683" y1="350.5" x2="1017" y2="350.5" stroke="#d4d4d4" stroke-width="1"/><line x1="671" y1="350.5" x2="676" y2="350.5" stroke="#000" stroke-width="1"/><line x1="683" y1="373.5" x2="1017" y2="373.5" stroke="#d4d4d4" stroke-width="1"/><line x1="671" y1="373.5" x2="676" y2="373.5" stroke="#000" stroke-width="1"/><line x1="683" y1="395.5" x2="1017" y2="395.5" stroke="#d4d4d4" stroke-width="1"/><line x1="671" y1="395.5" x2="676" y2="395.5" stroke="#000" stroke-width="1"/><line x1="683" y1="417.5" x2="1017" y2="417.5" stroke="#d4d4d4" stroke-width="1"/><line x1="671" y1="417.5" x2="676" y2="417.5" stroke="#000" stroke-width="1"/><line x1="683" y1="439.5" x2="1017" y2="439.5" stroke="#d4d4d4" stroke-width="1"/><line x1="671" y1="439.5" x2="676" y2="439.5" stroke="#000" stroke-width="1"/><line x1="683" y1="461.5" x2="1017" y2="461.5" stroke="#d4d4d4" stroke-width="1"/><line x1="671" y1="461.5" x2="676" y2="461.5" stroke="#000" stroke-width="1"/><line x1="683" y1="484.5" x2="1017" y2="484.5" stroke="#d4d4d4" stroke-width="1"/><line x1="671" y1="484.5" x2="676" y2="484.5" stroke="#000" stroke-width="1"/><line x1="671" y1="497.5" x2="676" y2="497.5" stroke="#000" stroke-width="1"/><line x1="682" y1="336.5" x2="1018" y2="336.5" stroke="#999999" stroke-width="1"/><line x1="682" y1="498.5" x2="1018" y2="498.5" stroke="#999999" stroke-width="1"/><line x1="682.5" y1="336" x2="682.5" y2="499" stroke="#999999" stroke-width="1"/><line x1="1017.5" y1="336" x2="1017.5" y2="499" stroke="#999999" stroke-width="1"/><line x1="683.5" y1="500" x2="683.5" y2="505" stroke="#000" stroke-width="1"/><line x1="794.5" y1="500" x2="794.5" y2="505" stroke="#000" stroke-width="1"/><line x1="905.5" y1="500" x2="905.5" y2="505" stroke="#000" stroke-width="1"/><line x1="1016.5" y1="500" x2="1016.5" y2="505" stroke="#000" stroke-width="1"/><line x1="1107" y1="116.5" x2="1112" y2="116.5" stroke="#000" stroke-width="1"/><line x1="1119" y1="137.5" x2="1412" y2="137.5" stroke="#d4d4d4" stroke-width="1"/><line x1="1107" y1="137.5" x2="1112" y2="137.5" stroke="#000" stroke-width="1"/><line x1="1119" y1="158.5" x2="1412" y2="158.5" stroke="#d4d4d4" stroke-width="1"/><line x1="1107" y1="158.5" x2="1112" y2="158.5" stroke="#000" stroke-width="1"/><line x1="1119" y1="180.5" x2="1412" y2="180.5" stroke="#d4d4d4" stroke-width="1"/><line x1="1107" y1="180.5" x2="1112" y2="180.5" stroke="#000" stroke-width="1"/><line x1="1119" y1="201.5" x2="1412" y2="201.5" stroke="#d4d4d4" stroke-width="1"/><line x1="1107" y1="201.5" x2="1112" y2="201.5" stroke="#000" stroke-width="1"/><line x1="1119" y1="222.5" x2="1412" y2="222.5" stroke="#d4d4d4" stroke-width="1"/><line x1="1107" y1="222.5" x2="1112" y2="222.5" stroke="#000" stroke-width="1"/><line x1="1119" y1="243.5" x2="1412" y2="243.5" stroke="#d4d4d4" stroke-width="1"/><line x1="1107" y1="243.5" x2="1112" y2="243.5" stroke="#000" stroke-width="1"/><line x1="1119" y1="264.5" x2="1412" y2="264.5" stroke="#d4d4d4" stroke-width="1"/><line x1="1107" y1="264.5" x2="1112" y2="264.5" stroke="#000" stroke-width="1"/><line x1="1119" y1="285.5" x2="1412" y2="285.5" stroke="#d4d4d4" stroke-width="1"/><line x1="1107" y1="285.5" x2="1112" y2="285.5" stroke="#000" stroke-width="1"/><line x1="1119" y1="306.5" x2="1412" y2="306.5" stroke="#d4d4d4" stroke-width="1"/><line x1="1107" y1="306.5" x2="1112" y2="306.5" stroke="#000" stroke-width="1"/><line x1="1119" y1="328.5" x2="1412" y2="328.5" stroke="#d4d4d4" stroke-width="1"/><line x1="1107" y1="328.5" x2="1112" y2="328.5" stroke="#000" stroke-width="1"/><line x1="1119" y1="349.5" x2="1412" y2="349.5" stroke="#d4d4d4" stroke-width="1"/><line x1="1107" y1="349.5" x2="1112" y2="349.5" stroke="#000" stroke-width="1"/><line x1="1119" y1="370.5" x2="1412" y2="370.5" stroke="#d4d4d4" stroke-width="1"/><line x1="1107" y1="370.5" x2="1112" y2="370.5" stroke="#000" stroke-width="1"/><line x1="1119" y1="391.5" x2="1412" y2="391.5" stroke="#d4d4d4" stroke-width="1"/><line x1="1107" y1="391.5" x2="1112" y2="391.5" stroke="#000" stroke-width="1"/><line x1="1119" y1="412.5" x2="1412" y2="412.5" stroke="#d4d4d4" stroke-width="1"/><line x1="1107" y1="412.5" x2="1112" y2="412.5" stroke="#000" stroke-width="1"/><line x1="1119" y1="434.5" x2="1412" y2="434.5" stroke="#d4d4d4" stroke-width="1"/><line x1="1107" y1="434.5" x2="1112" y2="434.5" stroke="#000" stroke-width="1"/><line x1="1119" y1="455.5" x2="1412" y2="455.5" stroke="#d4d4d4" stroke-width="1"/><line x1="1107" y1="455.5" x2="1112" y2="455.5" stroke="#000" stroke-width="1"/><line x1="1119" y1="476.5" x2="1412" y2="476.5" stroke="#d4d4d4" stroke-width="1"/><line x1="1107" y1="476.5" x2="1112" y2="476.5" stroke="#000" stroke-width="1"/><line x1="1107" y1="497.5" x2="1112" y2="497.5" stroke="#000" stroke-width="1"/><line x1="1119.5" y1="500" x2="1119.5" y2="505" stroke="#000" stroke-width="1"/><line x1="1192.5" y1="116" x2="1192.5" y2="498" stroke="#d4d4d4" stroke-width="1"/><line x1="1192.5" y1="500" x2="1192.5" y2="505" stroke="#000" stroke-width="1"/><line x1="1265.5" y1="116" x2="1265.5" y2="498" stroke="#d4d4d4" stroke-width="1"/><line x1="1265.5" y1="500" x2="1265.5" y2="505" stroke="#000" stroke-width="1"/><line x1="1338.5" y1="116" x2="1338.5" y2="498" stroke="#d4d4d4" stroke-width="1"/><line x1="1338.5" y1="500" x2="1338.5" y2="505" stroke="#000" stroke-width="1"/><line x1="1411.5" y1="500" x2="1411.5" y2="505" stroke="#000" stroke-width="1"/><line x1="1118" y1="115.5" x2="1413" y2="115.5" stroke="#999999" stroke-width="1"/><line x1="1118" y1="498.5" x2="1413" y2="498.5" stroke="#999999" stroke-width="1"/><line x1="1118.5" y1="115" x2="1118.5" y2="499" stroke="#999999" stroke-width="1"/><line x1="1412.5" y1="115" x2="1412.5" y2="499" stroke="#999999" stroke-width="1"/><line x1="676" y1="579.5" x2="681" y2="579.5" stroke="#000" stroke-width="1"/><line x1="683" y1="597.5" x2="1073" y2="597.5" stroke="#d4d4d4" stroke-width="1"/><line x1="676" y1="597.5" x2="681" y2="597.5" stroke="#000" stroke-width="1"/><line x1="683" y1="614.5" x2="1073" y2="614.5" stroke="#d4d4d4" stroke-width="1"/><line x1="676" y1="614.5" x2="681" y2="614.5" stroke="#000" stroke-width="1"/><line x1="683" y1="632.5" x2="1073" y2="632.5" stroke="#d4d4d4" stroke-width="1"/><line x1="676" y1="632.5" x2="681" y2="632.5" stroke="#000" stroke-width="1"/><line x1="683" y1="650.5" x2="1073" y2="650.5" stroke="#d4d4d4" stroke-width="1"/><line x1="676" y1="650.5" x2="681" y2="650.5" stroke="#000" stroke-width="1"/><line x1="683" y1="667.5" x2="1073" y2="667.5" stroke="#d4d4d4" stroke-width="1"/><line x1="676" y1="667.5" x2="681" y2="667.5" stroke="#000" stroke-width="1"/><line x1="683" y1="685.5" x2="1073" y2="685.5" stroke="#d4d4d4" stroke-width="1"/><line x1="676" y1="685.5" x2="681" y2="685.5" stroke="#000" stroke-width="1"/><line x1="683" y1="702.5" x2="1073" y2="702.5" stroke="#d4d4d4" stroke-width="1"/><line x1="676" y1="702.5" x2="681" y2="702.5" stroke="#000" stroke-width="1"/><line x1="683" y1="720.5" x2="1073" y2="720.5" stroke="#d4d4d4" stroke-width="1"/><line x1="676" y1="720.5" x2="681" y2="720.5" stroke="#000" stroke-width="1"/><line x1="683" y1="738.5" x2="1073" y2="738.5" stroke="#d4d4d4" stroke-width="1"/><line x1="676" y1="738.5" x2="681" y2="738.5" stroke="#000" stroke-width="1"/><line x1="683" y1="755.5" x2="1073" y2="755.5" stroke="#d4d4d4" stroke-width="1"/><line x1="676" y1="755.5" x2="681" y2="755.5" stroke="#000" stroke-width="1"/><line x1="676" y1="773.5" x2="681" y2="773.5" stroke="#000" stroke-width="1"/><line x1="1075" y1="579.5" x2="1080" y2="579.5" stroke="#000" stroke-width="1"/><line x1="1075" y1="601.5" x2="1080" y2="601.5" stroke="#000" stroke-width="1"/><line x1="1075" y1="622.5" x2="1080" y2="622.5" stroke="#000" stroke-width="1"/><line x1="1075" y1="644.5" x2="1080" y2="644.5" stroke="#000" stroke-width="1"/><line x1="1075" y1="665.5" x2="1080" y2="665.5" stroke="#000" stroke-width="1"/><line x1="1075" y1="687.5" x2="1080" y2="687.5" stroke="#000" stroke-width="1"/><line x1="1075" y1="708.5" x2="1080" y2="708.5" stroke="#000" stroke-width="1"/><line x1="1075" y1="730.5" x2="1080" y2="730.5" stroke="#000" stroke-width="1"/><line x1="1075" y1="751.5" x2="1080" y2="751.5" stroke="#000" stroke-width="1"/><line x1="1075" y1="773.5" x2="1080" y2="773.5" stroke="#000" stroke-width="1"/><line x1="683.5" y1="776" x2="683.5" y2="781" stroke="#000" stroke-width="1"/><line x1="722.5" y1="579" x2="722.5" y2="774" stroke="#d4d4d4" stroke-width="1"/><line x1="722.5" y1="776" x2="722.5" y2="781" stroke="#000" stroke-width="1"/><line x1="761.5" y1="579" x2="761.5" y2="774" stroke="#d4d4d4" stroke-width="1"/><line x1="761.5" y1="776" x2="761.5" y2="781" stroke="#000" stroke-width="1"/><line x1="800.5" y1="579" x2="800.5" y2="774" stroke="#d4d4d4" stroke-width="1"/><line x1="800.5" y1="776" x2="800.5" y2="781" stroke="#000" stroke-width="1"/><line x1="839.5" y1="579" x2="839.5" y2="774" stroke="#d4d4d4" stroke-width="1"/><line x1="839.5" y1="776" x2="839.5" y2="781" stroke="#000" stroke-width="1"/><line x1="878.5" y1="579" x2="878.5" y2="774" stroke="#d4d4d4" stroke-width="1"/><line x1="878.5" y1="776" x2="878.5" y2="781" stroke="#000" stroke-width="1"/><line x1="916.5" y1="579" x2="916.5" y2="774" stroke="#d4d4d4" stroke-width="1"/><line x1="916.5" y1="776" x2="916.5" y2="781" stroke="#000" stroke-width="1"/><line x1="955.5" y1="579" x2="955.5" y2="774" stroke="#d4d4d4" stroke-width="1"/><line x1="955.5" y1="776" x2="955.5" y2="781" stroke="#000" stroke-width="1"/><line x1="994.5" y1="579" x2="994.5" y2="774" stroke="#d4d4d4" stroke-width="1"/><line x1="994.5" y1="776" x2="994.5" y2="781" stroke="#000" stroke-width="1"/><line x1="1033.5" y1="579" x2="1033.5" y2="774" stroke="#d4d4d4" stroke-width="1"/><line x1="1033.5" y1="776" x2="1033.5" y2="781" stroke="#000" stroke-width="1"/><line x1="1072.5" y1="776" x2="1072.5" y2="781" stroke="#000" stroke-width="1"/><line x1="682" y1="578.5" x2="1074" y2="578.5" stroke="#999999" stroke-width="1"/><line x1="682" y1="774.5" x2="1074" y2="774.5" stroke="#999999" stroke-width="1"/><line x1="682.5" y1="578" x2="682.5" y2="775" stroke="#999999" stroke-width="1"/><line x1="1073.5" y1="578" x2="1073.5" y2="775" stroke="#999999" stroke-width="1"/><line x1="830" y1="560.5" x2="850" y2="560.5" stroke="#9a9a9a" stroke-width="1"/><line x1="1202" y1="578.5" x2="1207" y2="578.5" stroke="#000" stroke-width="1"/><line x1="1202" y1="598.5" x2="1207" y2="598.5" stroke="#000" stroke-width="1"/><line x1="1202" y1="617.5" x2="1207" y2="617.5" stroke="#000" stroke-width="1"/><line x1="1202" y1="636.5" x2="1207" y2="636.5" stroke="#000" stroke-width="1"/><line x1="1202" y1="656.5" x2="1207" y2="656.5" stroke="#000" stroke-width="1"/><line x1="1202" y1="676.5" x2="1207" y2="676.5" stroke="#000" stroke-width="1"/><line x1="1202" y1="695.5" x2="1207" y2="695.5" stroke="#000" stroke-width="1"/><line x1="1202" y1="714.5" x2="1207" y2="714.5" stroke="#000" stroke-width="1"/><line x1="1202" y1="734.5" x2="1207" y2="734.5" stroke="#000" stroke-width="1"/><line x1="1202" y1="754.5" x2="1207" y2="754.5" stroke="#000" stroke-width="1"/><line x1="1202" y1="773.5" x2="1207" y2="773.5" stroke="#000" stroke-width="1"/><line x1="1214.5" y1="776" x2="1214.5" y2="781" stroke="#000" stroke-width="1"/><line x1="1280.5" y1="776" x2="1280.5" y2="781" stroke="#000" stroke-width="1"/><line x1="1345.5" y1="776" x2="1345.5" y2="781" stroke="#000" stroke-width="1"/><line x1="1411.5" y1="776" x2="1411.5" y2="781" stroke="#000" stroke-width="1"/><line x1="1213" y1="577.5" x2="1413" y2="577.5" stroke="#999999" stroke-width="1"/><line x1="1213" y1="774.5" x2="1413" y2="774.5" stroke="#999999" stroke-width="1"/><line x1="1213.5" y1="577" x2="1213.5" y2="775" stroke="#999999" stroke-width="1"/><line x1="1412.5" y1="577" x2="1412.5" y2="775" stroke="#999999" stroke-width="1"/></svg>
<div style="position:absolute;left:0;top:0;width:1433px;height:844px;box-sizing:border-box;border:1px solid #a8a8a8;border-bottom:2px solid #a3a3a3;border-radius:7px 7px 4px 4px;box-shadow:0 0 0 30px #e2e2e2;pointer-events:none;"></div>
<div style="position:absolute;left:329px;top:0px;width:353px;height:1px;background:#b41ab6;"></div>
<div style="position:absolute;left:0px;top:1px;width:6px;height:1px;background:#e60ce8;"></div>
<div style="position:absolute;left:0px;top:2px;width:3px;height:1px;background:#e60ce8;"></div>
<div style="position:absolute;left:0px;top:4px;width:2px;height:1px;background:#d010d4;"></div>
<div style="position:absolute;left:0px;top:6px;width:2px;height:1px;background:#d010d4;"></div>
<div style="position:absolute;left:0px;top:8px;width:2px;height:1px;background:#c812cc;"></div>
<div style="position:absolute;left:0px;top:13px;width:2px;height:1px;background:#b80fbc;"></div>
<div style="position:absolute;left:0px;top:15px;width:2px;height:2px;background:#b80fbc;"></div>
<div style="position:absolute;left:36px;top:0px;width:9px;height:1px;background:#1e9a2a;"></div>
</body></html>
